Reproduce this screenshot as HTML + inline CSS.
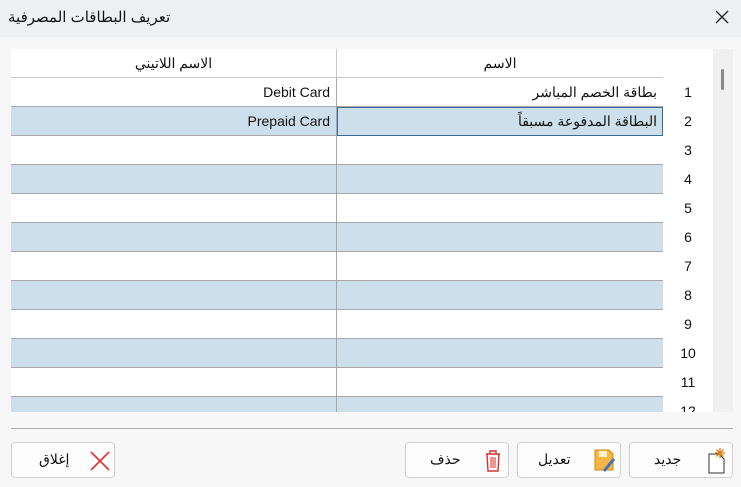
<!DOCTYPE html>
<html><head><meta charset="utf-8"><style>
*{margin:0;padding:0;box-sizing:border-box}
body{width:741px;height:487px;background:#f7f7f7;font-family:"Segoe UI","Liberation Sans","Noto Sans CJK SC",sans-serif;font-size:14px;color:#111;position:relative;overflow:hidden}
.title{position:absolute;left:0;top:0;width:741px;height:37px;background:#eef0f2}
.title span{position:absolute;left:8px;top:8px;font-size:15px}
.x{position:absolute;right:10px;top:8px}
.grid{position:absolute;left:11px;top:49px;width:702px;height:363px;background:#fff;overflow:hidden}
.sb{position:absolute;left:713px;top:49px;width:20px;height:363px;background:#f0f0f0}
.thumb{position:absolute;left:8px;top:20px;width:3px;height:21px;background:#8a8a8a;border-radius:2px}
.hdr{position:absolute;top:0;height:29px;line-height:29px;text-align:center;border-bottom:1px solid #c8c8c8}
.row{position:absolute;left:0;width:702px;height:29px}
.c{position:absolute;top:0;height:29px;line-height:28px;border-bottom:1px solid #a8a8a8;direction:rtl;padding-right:6px}
.num{position:absolute;left:652px;width:50px;height:29px;line-height:29px;text-align:center}
.btn{position:absolute;top:442px;height:36px;background:#fdfdfd;border:1px solid #d0d0d0;border-radius:4px}
.btn span{position:absolute;top:8px}
</style></head><body>
<div class="title"><span>تعريف البطاقات المصرفية</span>
<svg class="x" width="18" height="18" viewBox="0 0 18 18"><path d="M3 3L15 15M15 3L3 15" stroke="#222" stroke-width="1.3"/></svg></div>
<div class="grid">
<div class="hdr" style="left:0;width:326px;border-right:1px solid #c8c8c8">الاسم اللاتيني</div>
<div class="hdr" style="left:326px;width:326px">الاسم</div>
<div id="rows"></div>
</div>
<div class="sb"><div class="thumb"></div></div>
<div style="position:absolute;left:11px;top:428px;width:722px;height:1px;background:#b0b0b0"></div>
<div class="btn" style="left:11px;width:104px"><span style="left:27px">إغلاق</span>
<svg style="position:absolute;left:78px;top:8px" width="20" height="20"><path d="M1 1L19 19M19 1L1 19" stroke="#e03030" stroke-width="1.6"/></svg></div>
<div class="btn" style="left:405px;width:104px"><span style="left:24px">حذف</span>
<svg style="position:absolute;left:78px;top:6px" width="18" height="24"><path d="M2 5H16M6 5V2H12V5M3 5L4 22H14L15 5" fill="none" stroke="#d83030" stroke-width="1.4"/><path d="M7 8V19M9 8V19M11 8V19" stroke="#d83030"/></svg></div>
<div class="btn" style="left:517px;width:104px"><span style="left:20px">تعديل</span>
<svg style="position:absolute;left:76px;top:6px" width="22" height="24"><path d="M1 1H15L19 5V21H1Z" fill="#f5b642" stroke="#d08a10"/><rect x="5" y="2" width="8" height="6" fill="#fff3d0"/><path d="M9 21L19 9L21 11L11 23Z" fill="#3a70c8"/></svg></div>
<div class="btn" style="left:629px;width:104px"><span style="left:24px">جديد</span>
<svg style="position:absolute;left:76px;top:4px" width="22" height="28"><path d="M3 7H13L18 12V26H3Z" fill="#fff" stroke="#333"/><path d="M14 1V11M9 6H19M10.5 2.5L17.5 9.5M17.5 2.5L10.5 9.5" stroke="#e08010" stroke-width="1.3"/></svg></div>
<script>
var d=[["Debit Card","بطاقة الخصم المباشر"],["Prepaid Card","البطاقة المدفوعة مسبقاً"]];
var h="";
for(var i=0;i<12;i++){var t=29+i*29,bg=i%2?"#cddfeb":"#fff",r=d[i]||["",""];
h+='<div class="row" style="top:'+t+'px"><div class="c" style="left:0;width:326px;background:'+bg+';border-right:1px solid #a8a8a8;text-align:right">'+r[0]+'</div><div class="c" style="left:326px;width:326px;background:'+bg+';text-align:right;'+(i==1?'outline:1px solid #3a6a96;outline-offset:-1px;':'')+'">'+r[1]+'</div><div class="num">'+(i+1)+'</div></div>';}
document.getElementById("rows").innerHTML=h;
</script>
</body></html>
